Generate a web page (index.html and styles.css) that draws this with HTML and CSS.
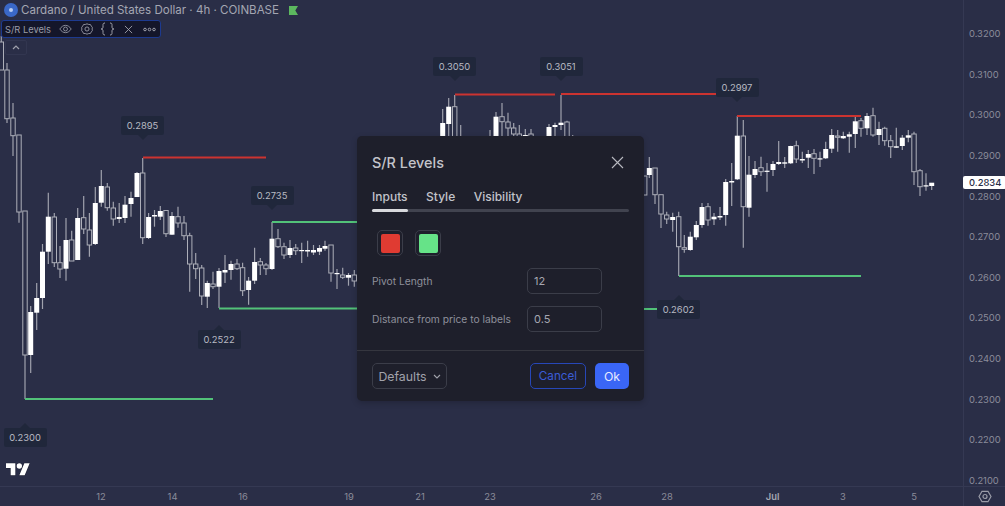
FILE: index.html
```html
<!DOCTYPE html>
<html lang="en">
<head>
  <meta charset="UTF-8" />
  <title>S/R Levels</title>
  <link rel="stylesheet" href="styles.css">
</head>
<body>
  <div class="screen">
    <div class="main">
      <div class="plot" id="plot">
        <svg class="candles" id="candles" width="963" height="486"></svg>

        <div class="chart-title">
          <span class="symbol-logo"><span class="symbol-dot"></span></span>
          <span>Cardano / United States Dollar · 4h · COINBASE</span>
          <svg class="flag" width="9" height="9" viewBox="0 0 10 10"><path d="M0 0h10L7 5l3 5H0z" /></svg>
        </div>

        <div class="legend">
          <span class="legend-name">S/R Levels</span>
          <span class="legend-slot"><svg class="legend-icon" width="13" height="10" viewBox="0 0 16 12"><path d="M1 6c2-3 4.400-4.500 7-4.500S13 3 15 6c-2 3-4.400 4.500-7 4.500S3 9 1 6z" /><circle cx="8" cy="6" r="2.400" /></svg></span>
          <span class="legend-slot"><svg class="legend-icon" width="12" height="12" viewBox="0 0 14 14"><path d="M7 1l2 .7 2 .1 1 1.800 1.200 1.400-.2 2 .2 2L12 10.400l-1 1.800-2 .1-2 .7-2-.7-2-.1-1-1.800L.8 9l.2-2-.2-2L2 3.600l1-1.800 2-.1z" /><circle cx="7" cy="7" r="2.400" /></svg></span>
          <span class="legend-slot"><svg class="legend-icon" width="15" height="14" viewBox="0 0 15 14"><path d="M5 1C3 1 3 2 3 3.500V5C3 6.200 2.400 7 1 7c1.400 0 2 .8 2 2v1.500C3 12 3 13 5 13M10 1c2 0 2 1 2 2.500V5c0 1.200.6 2 2 2-1.400 0-2 .8-2 2v1.500c0 1.500 0 2.500-2 2.500" /></svg></span>
          <span class="legend-slot"><svg class="legend-icon" width="9" height="9" viewBox="0 0 10 10"><path d="M1 1l8 8M9 1L1 9" /></svg></span>
          <span class="legend-slot"><svg class="legend-icon" width="13" height="5" viewBox="0 0 13 5"><circle cx="2" cy="2.500" r="1.300" /><circle cx="6.500" cy="2.500" r="1.300" /><circle cx="11" cy="2.500" r="1.300" /></svg></span>
        </div>

        <div class="collapse">
          <svg width="8" height="5" viewBox="0 0 8 5"><path d="M1 4l3-3 3 3" /></svg>
        </div>

        <svg class="tv-logo" width="24" height="14" viewBox="0 0 36 21"><path d="M14 20H7V9H0V2h14v18zM28 20h-8l7.500-18h8L28 20z" /><circle cx="20" cy="6" r="4" /></svg>

        <div class="dialog">
          <div class="dialog-head">
            <h2>S/R Levels</h2>
            <svg class="close" width="13" height="13" viewBox="0 0 13 13"><path d="M1 1l11 11M12 1L1 12" /></svg>
          </div>
          <div class="tabs">
            <span class="tab">Inputs</span>
            <span class="tab">Style</span>
            <span class="tab">Visibility</span>
          </div>
          <div class="tab-track"><div class="tab-active"></div></div>
          <div class="swatches">
            <span class="swatch"><span class="swatch-red"></span></span>
            <span class="swatch"><span class="swatch-green"></span></span>
          </div>
          <div class="field">
            <label>Pivot Length</label>
            <span class="input">12</span>
          </div>
          <div class="field">
            <label>Distance from price to labels</label>
            <span class="input">0.5</span>
          </div>
          <div class="dialog-foot">
            <span class="btn defaults">Defaults
              <svg width="8" height="5" viewBox="0 0 8 5"><path d="M1 1l3 3 3-3" /></svg>
            </span>
            <span class="btn cancel">Cancel</span>
            <span class="btn ok">Ok</span>
          </div>
        </div>
      </div>

      <div class="price-axis">
        <span>0.3200</span>
        <span>0.3100</span>
        <span>0.3000</span>
        <span>0.2900</span>
        <span>0.2800</span>
        <span>0.2700</span>
        <span>0.2600</span>
        <span>0.2500</span>
        <span>0.2400</span>
        <span>0.2300</span>
        <span>0.2200</span>
        <span>0.2100</span>
        <div class="last-price">0.2834</div>
      </div>
    </div>

    <div class="time-row">
      <div class="time-axis" id="timeAxis"></div>
      <div class="corner">
        <svg width="14" height="15" viewBox="0 0 14 15"><path d="M1 7.500l3-5.200h6l3 5.200-3 5.200H4z" /><circle cx="7" cy="7.500" r="2" /></svg>
      </div>
    </div>
  </div>

  <script src="chart.js"></script>
</body>
</html>
```

FILE: styles.css
```css
* {
  box-sizing: border-box;
}
body {
  margin: 0;
  overflow: hidden;
  background: #2a2e47;
  font-family: Inter, 'Liberation Sans', sans-serif;
}
.screen {
  display: flex;
  flex-direction: column;
  width: 1005px;
  height: 506px;
}
.main {
  display: flex;
  flex: 1;
  min-height: 0;
}
.plot {
  position: relative;
  flex: 1;
}
.candles {
  display: block;
}

/* chart header */
.chart-title {
  position: absolute;
  top: 2px;
  left: 4px;
  display: flex;
  align-items: center;
  gap: 3px;
  height: 16px;
  font-size: 11.550px;
  color: #a4a6b2;
  white-space: nowrap;
}
.symbol-logo {
  display: flex;
  align-items: center;
  justify-content: center;
  width: 14px;
  height: 14px;
  border-radius: 50%;
  background: #3a68c8;
}
.symbol-dot {
  width: 4px;
  height: 4px;
  border-radius: 50%;
  background: #b9cdf3;
}
.flag {
  margin-left: 7px;
}
.flag path {
  fill: #5cb85f;
}
.legend {
  position: absolute;
  top: 20px;
  left: 1px;
  display: flex;
  align-items: center;
  width: 160px;
  height: 18px;
  padding: 0 3px;
  background: #14162a;
  border: 1px solid #1d3a8f;
  border-radius: 3px;
}
.legend-name {
  margin-right: 4px;
  font-size: 9.300px;
  color: #9b9da8;
  white-space: nowrap;
}
.legend-slot {
  display: flex;
  align-items: center;
  justify-content: center;
  flex: none;
  width: 21px;
}
.legend-icon {
  fill: none;
  stroke: #a0a2ad;
  stroke-width: 1;
}
.collapse {
  position: absolute;
  top: 40px;
  left: 5px;
  display: flex;
  align-items: center;
  justify-content: center;
  width: 22px;
  height: 15px;
  border: 1px solid #323650;
  border-radius: 2px;
}
.collapse svg {
  fill: none;
  stroke: #a0a2ad;
  stroke-width: 1.200;
}
.tv-logo {
  position: absolute;
  left: 6px;
  top: 462px;
  fill: #fff;
  stroke: #1d1f30;
  stroke-width: 1.500;
  paint-order: stroke;
}

/* level labels */
.tip {
  position: absolute;
  width: 43px;
  height: 19px;
  line-height: 19px;
  text-align: center;
  font-size: 9.400px;
  color: #b8bac3;
  background: #20273b;
  border-radius: 2px;
}
.tip::after {
  content: "";
  position: absolute;
  left: 50%;
  margin-left: -5px;
  border: 5px solid transparent;
}
.tip.down::after {
  top: 100%;
  border-top-color: #20273b;
  border-bottom-width: 0;
}
.tip.up::after {
  bottom: 100%;
  border-bottom-color: #20273b;
  border-top-width: 0;
}

/* dialog */
.dialog {
  position: absolute;
  top: 136px;
  left: 356.500px;
  width: 287.500px;
  height: 265px;
  padding: 0 15px 0 15.500px;
  background: #1e1f2b;
  border-radius: 5px;
  box-shadow: 0 2px 6px rgba(0,0,0,0.2);
}
.dialog-head {
  display: flex;
  align-items: center;
  justify-content: space-between;
  height: 52px;
  padding-right: 5px;
}
h2 {
  margin: 0;
  font-size: 14.400px;
  font-weight: 500;
  color: #c3c4ca;
}
.close {
  fill: none;
  stroke: #b8b9c0;
  stroke-width: 1.100;
}
.tabs {
  display: flex;
  gap: 18.500px;
  height: 18px;
  line-height: 18px;
  font-size: 12px;
  font-weight: 500;
  color: #c2c3ca;
}
.tab-track {
  width: 257px;
  height: 3px;
  margin-top: 3px;
  background: #41434f;
  border-radius: 2px;
}
.tab-active {
  width: 36px;
  height: 3px;
  background: #d8d9dd;
  border-radius: 2px;
}
.swatches {
  display: flex;
  gap: 12px;
  margin: 18px 0 12px 5px;
}
.swatch {
  display: flex;
  align-items: center;
  justify-content: center;
  width: 26px;
  height: 26px;
  border: 1px solid #3b3d49;
  border-radius: 5px;
}
.swatch span {
  width: 19px;
  height: 19px;
  border-radius: 2px;
}
.swatch-red {
  background: #e03b32;
}
.swatch-green {
  background: #66e388;
}
.field {
  display: flex;
  align-items: center;
  justify-content: space-between;
  height: 26px;
  margin-bottom: 12px;
  padding-right: 27px;
}
.field + .field {
  margin-bottom: 18px;
}
.field label {
  font-size: 10.260px;
  color: #8e909b;
}
.input {
  width: 75px;
  height: 26px;
  padding-left: 6px;
  line-height: 24px;
  font-size: 11px;
  color: #a6a7b1;
  border: 1px solid #3b3d49;
  border-radius: 5px;
}
.dialog-foot {
  display: flex;
  align-items: center;
  gap: 9px;
  margin: 0 -15px 0 -15.500px;
  padding: 12px 15px 12px 15.500px;
  border-top: 1px solid #35363f;
}
.btn {
  display: flex;
  align-items: center;
  justify-content: center;
  height: 26px;
  font-size: 12.300px;
  border-radius: 5px;
}
.defaults {
  gap: 6px;
  width: 75px;
  margin-right: auto;
  color: #a1a2ac;
  border: 1px solid #3b3d49;
}
.defaults svg {
  fill: none;
  stroke: #a1a2ac;
  stroke-width: 1.100;
}
.cancel {
  width: 56px;
  font-size: 11.700px;
  color: #3b5cd6;
  border: 1px solid #2747b8;
}
.ok {
  width: 34px;
  color: #e6eaff;
  background: #3a66f6;
}

/* axes */
.price-axis {
  position: relative;
  flex: none;
  display: flex;
  flex-direction: column;
  width: 42px;
  padding-top: 14px;
  border-left: 1px solid #353953;
}
.price-axis span {
  flex: none;
  height: 40.640px;
  line-height: 40.640px;
  padding-left: 5px;
  font-size: 9.400px;
  color: #8a8c9a;
}
.last-price {
  position: absolute;
  top: 176px;
  left: -1px;
  width: 43px;
  height: 13px;
  line-height: 13px;
  padding-left: 6px;
  font-size: 9.400px;
  font-weight: 500;
  color: #2a2e47;
  background: #fff;
  border-radius: 2px;
}
.time-row {
  display: flex;
  flex: none;
  height: 20px;
  border-top: 1px solid #353953;
}
.time-axis {
  position: relative;
  flex: 1;
}
.tick {
  position: absolute;
  top: 0;
  width: 30px;
  margin-left: -15px;
  line-height: 19px;
  text-align: center;
  font-size: 9.400px;
  color: #8a8c9a;
}
.tick.month {
  font-weight: 600;
  color: #a4a6b2;
}
.corner {
  display: flex;
  align-items: center;
  justify-content: center;
  flex: none;
  width: 42px;
  border-left: 1px solid #353953;
}
.corner svg {
  fill: none;
  stroke: #9a9ca8;
  stroke-width: 1.200;
}
```

FILE: chart.js
```js
// x, wick top, wick bottom, body top, body bottom, filled
const candles = [
  [1.3,36,70,42,70,0],[7,63,123,70,118.7,0],[13,103,156,118,135.7,0],[19,135,222.7,135,212,0],
  [25,211,399,211,355,0],[30.7,306,373,312,355,1],[36.7,283,330,298,312.7,1],[42.5,244,309,251.7,298,1],
  [48.3,192.7,264,216.7,251.7,1],[54.3,213,267,217,262.7,0],[60,246,278,262.7,269,0],[66,218,280.7,240,268.7,1],
  [71.7,230.7,261,240,261,0],[77.7,208,260,218,260,1],[83.7,196,234,217.7,229,0],[89.4,213,256.7,230,245,0],
  [95.3,187,245,203,244,1],[101.3,170,206.7,186,202.7,1],[107.3,183,210.7,187,207.7,0],[113.3,201.7,225.7,208,219,0],
  [119.2,203,223,217,219,1],[125,196,223,204.7,218,1],[131,191.7,216.7,198,204,1],[137,172,197,173,197,1],
  [142.7,158,244,173,237.7,0],[148.6,213,239,217,238,1],[154.5,210,226.7,215,216.5,1],[160.3,206,220,211,216.7,1],
  [166,210,237,210.5,233.7,0],[172,212,234.7,216,234.7,1],[178,206.7,227.7,216.7,223,0],[184,216,240,223,235.7,0],
  [189.7,232.7,291.7,235.7,264,0],[195.7,253,279,264,268.7,0],[201.7,265,305,268,296,0],[207.3,280.7,308,283,296.7,1],
  [213,271.7,289,284,286.7,0],[219,268,308,271,286.7,1],[225,255,283,270,272.5,1],[231,260.7,279.7,264,270,1],
  [237,259,270,264,268.7,0],[242.6,262.7,296,267.7,290.7,0],[248.6,277,304.7,280.7,290,1],[254.6,247.7,284,262,280.7,1],
  [260.3,258,275,261.7,265,0],[266,263,275,265,268.7,0],[272,222,270,238.7,269,1],[278,229,248,238.7,246.7,0],
  [284,242.7,259,246.7,255,0],[290,240,258,248,255,1],[295.7,244,255,248,250.7,0],[301.7,242.7,263,250,251,1],
  [307.6,240.7,256.7,250,251.5,1],[313.5,245,255,250,252.5,1],[319.5,245,255,248,251.7,1],[325,240.7,250.7,246,248.7,1],
  [331,245,281.7,245,273,0],[337,269,289,273,274,1],[342.7,267.7,279,275,277.3,0],[348.5,273,285.7,275,277.7,1],
  [354.3,270,286.7,275,281,0],
  [442.7,109,140,123,140,1],[448.7,98,140,106.7,124,1],[454.7,95,140,106.7,140,0],[460.7,125,140,140,140,0],
  [490,130,140,140,140,0],[496,112,140,116.7,140,1],[502,103,140,116.7,121.7,0],[508,112.7,140,122,128,0],
  [513.7,123,140,128,134,0],[519.3,125,140,134,140,0],[525.3,129,140,135,140,1],[531,129,140,134,140,0],
  [549,124,140,127,140,1],[555,122.7,140,125,127,1],[561,95,130,122.7,125,1],[567,120.7,140,122,140,0],[572.7,135,140,140,140,0],
  [644.7,176,195,176,195,0],[649.3,157,178,168,175,1],[655,168,204,168,194.7,0],[661,194.7,228,194.7,214,0],
  [666.7,211.7,224,215,219,0],[672.7,212.7,231.7,217,220,1],[678.7,211.7,276,216.7,246.7,0],[684.3,235,252.7,247.7,249.3,0],
  [690.3,231.7,250.7,236.7,250,1],[696.3,221,240,225,237.3,1],[702,203,227.7,207,225,1],[708,203,225.7,206.7,220,0],
  [714,213,225,216.7,219.3,1],[720,207,220,216,217.5,1],[725.7,179,225.7,182,215,1],[731.7,163,206,181,182.5,1],
  [737.3,116,180,135.7,179.3,1],[743.3,120,247.7,136,206.7,0],[749,156,216.7,174.7,207.7,1],[755,161,178,169,175,1],
  [761,156.7,176,167.7,171.7,0],[767,163,191.7,170.7,171.7,1],[773,161,176,164,170,1],[778.7,141,165,162,164,1],
  [784.7,157,168,162.3,163.7,1],[790.7,145.7,164,146,163.3,1],[796.3,140.7,163,145.7,159,0],[802.3,151.7,163,159,160.5,1],
  [808.3,150,168,154,157.7,1],[814,149,174,153.7,158.3,0],[820,151.7,167,158.3,159.5,1],[825.7,141.7,159,149,158.3,1],
  [831.7,129,153,135,148.7,1],[837.7,130,151.7,136,137.3,0],[843.3,131.7,139,136,138.3,1],[849.3,131.7,152.7,134.3,136.7,1],
  [855.3,117,148,121.3,134,1],[861,118,136.7,120.7,128.3,0],[867,113,135,116,128.3,1],[873,107.7,136.7,115.7,135,0],
  [879,121.7,145,129,135,1],[884.7,126.7,145.7,128.3,140.7,0],[890.7,135,158,140.7,146.7,0],[896.3,127.7,148,146.3,147.7,1],
  [902.3,135,150,137.7,146,1],[908.3,130,142.3,135.3,137.7,1],[914,131.7,185,134,171.7,0],[920,169,196,170.7,186.7,0],
  [926,173.3,190.7,185.3,186.5,1],[931.7,183,190,182.7,186,1]
];

// x1, x2, y, colour
const levels = [
  [143,266,157.5,"#cc3330"],[455,555,94.5,"#cc3330"],[561,717,94,"#cc3330"],[737,861,116,"#cc3330"],
  [272,357,222,"#52c279"],[219,357,308.5,"#52c279"],[25,213,399,"#52c279"],[644,657,309,"#52c279"],[679,861,276,"#52c279"]
];

// text, left, top, arrow side
const tips = [
  ["0.2895",121,115.5,"down"],["0.3050",433,57,"down"],["0.3051",539.5,57,"down"],["0.2997",715.5,78,"down"],
  ["0.2735",250.5,186,"down"],["0.2522",197.5,330,"up"],["0.2300",3.5,428,"up"],["0.2602",657,299.5,"up"]
];

const ticks = [
  ["12",101],["14",172.5],["16",243],["19",349],["21",420],["23",490],["26",596],["28",667],["Jul",772.7,"month"],["3",843],["5",914]
];

const svg = document.getElementById("candles");
let out = "";

candles.forEach(([x, top, bot, bodyTop, bodyBot, filled]) => {
  out += `<line x1="${x}" x2="${x}" y1="${top}" y2="${bot}" stroke="#a0a2ad" stroke-width="1.2"/>`;
  const h = Math.max(bodyBot - bodyTop, 1.2);
  if (filled) {
    out += `<rect x="${x - 2.5}" y="${bodyTop}" width="5" height="${h}" fill="#fff"/>`;
  } else if (bodyBot > bodyTop) {
    out += `<rect x="${x - 2.2}" y="${bodyTop}" width="4.4" height="${h}" fill="#2a2e47" stroke="#adafb9" stroke-width="1"/>`;
  }
});

levels.forEach(([x1, x2, y, color]) => {
  out += `<line x1="${x1}" x2="${x2}" y1="${y}" y2="${y}" stroke="${color}" stroke-width="2"/>`;
});
svg.innerHTML = out;

const plot = document.getElementById("plot");
const dialog = plot.querySelector(".dialog");
tips.forEach(([text, left, top, side]) => {
  const tip = document.createElement("div");
  tip.className = "tip " + side;
  tip.textContent = text;
  tip.style.left = left + "px";
  tip.style.top = top + "px";
  plot.insertBefore(tip, dialog);
});

const axis = document.getElementById("timeAxis");
ticks.forEach(([text, x, cls]) => {
  const tick = document.createElement("span");
  tick.className = cls ? "tick " + cls : "tick";
  tick.textContent = text;
  tick.style.left = x + "px";
  axis.appendChild(tick);
});
```
